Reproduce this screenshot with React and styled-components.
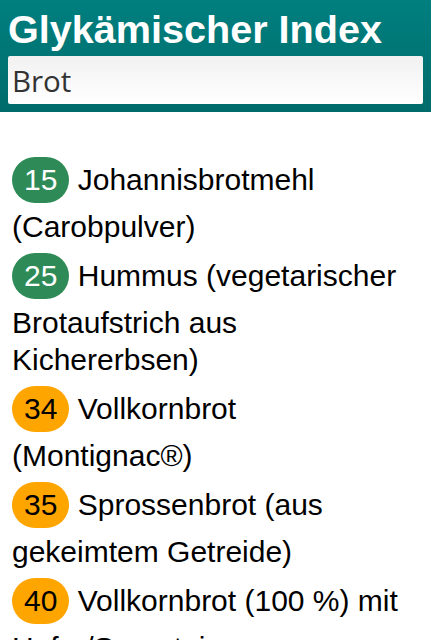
import React from "react";
import styled, { createGlobalStyle } from "styled-components";

const Global = createGlobalStyle`
  html, body { margin: 0; padding: 0; background: #ffffff; }
  body { font-family: "Liberation Sans", Arial, sans-serif; color: #000; }
`;

const Header = styled.header`
  display: flex;
  flex-direction: column;
  gap: 4px;
  padding: 7px 8px 8px;
  background: linear-gradient(to bottom, #007f7f 0%, #006b6b 100%);
`;

const Title = styled.h1`
  margin: 0;
  font-family: "Liberation Sans", Arial, sans-serif;
  font-weight: 700;
  font-size: 39.6px;
  line-height: normal;
  color: #ffffff;
`;

const Search = styled.input`
  box-sizing: border-box;
  width: 100%;
  height: 48px;
  margin: 0;
  padding: 0 4px;
  border: none;
  border-radius: 2px;
  outline: none;
  background: linear-gradient(to bottom, #f1f1f1 0%, #ffffff 100%);
  font-family: "Open Sans", "Noto Sans", sans-serif;
  font-size: 29.5px;
  color: #333333;
`;

const List = styled.ul`
  list-style: none;
  margin: 0;
  padding: 45px 12px 0;
  display: flex;
  flex-direction: column;
  gap: 8px;
`;

const Item = styled.li`
  font-size: 30px;
  line-height: 37px;
  color: #000;
`;

const Badge = styled.span`
  display: inline-block;
  line-height: normal;
  padding: 6px 12px;
  margin-bottom: 5px;
  border-radius: 24px;
  background: ${(p) => (p.$level === "low" ? "#2e8b57" : "#ffa500")};
  color: ${(p) => (p.$level === "low" ? "#ffffff" : "#000000")};
`;

const foods = [
  { gi: 15, name: "Johannisbrotmehl (Carobpulver)" },
  { gi: 25, name: "Hummus (vegetarischer Brotaufstrich aus Kichererbsen)" },
  { gi: 34, name: "Vollkornbrot (Montignac®)" },
  { gi: 35, name: "Sprossenbrot (aus gekeimtem Getreide)" },
  { gi: 40, name: "Vollkornbrot (100 %) mit Hefe-/Sauerteig" },
  { gi: 45, name: "Pumpernickel" },
];

export default function App() {
  return (
    <>
      <Global />
      <Header>
        <Title>Glykämischer Index</Title>
        <Search defaultValue="Brot" />
      </Header>
      <List>
        {foods.map((f) => (
          <Item key={f.name}>
            <Badge $level={f.gi <= 30 ? "low" : "mid"}>{f.gi}</Badge> {f.name}
          </Item>
        ))}
      </List>
    </>
  );
}
